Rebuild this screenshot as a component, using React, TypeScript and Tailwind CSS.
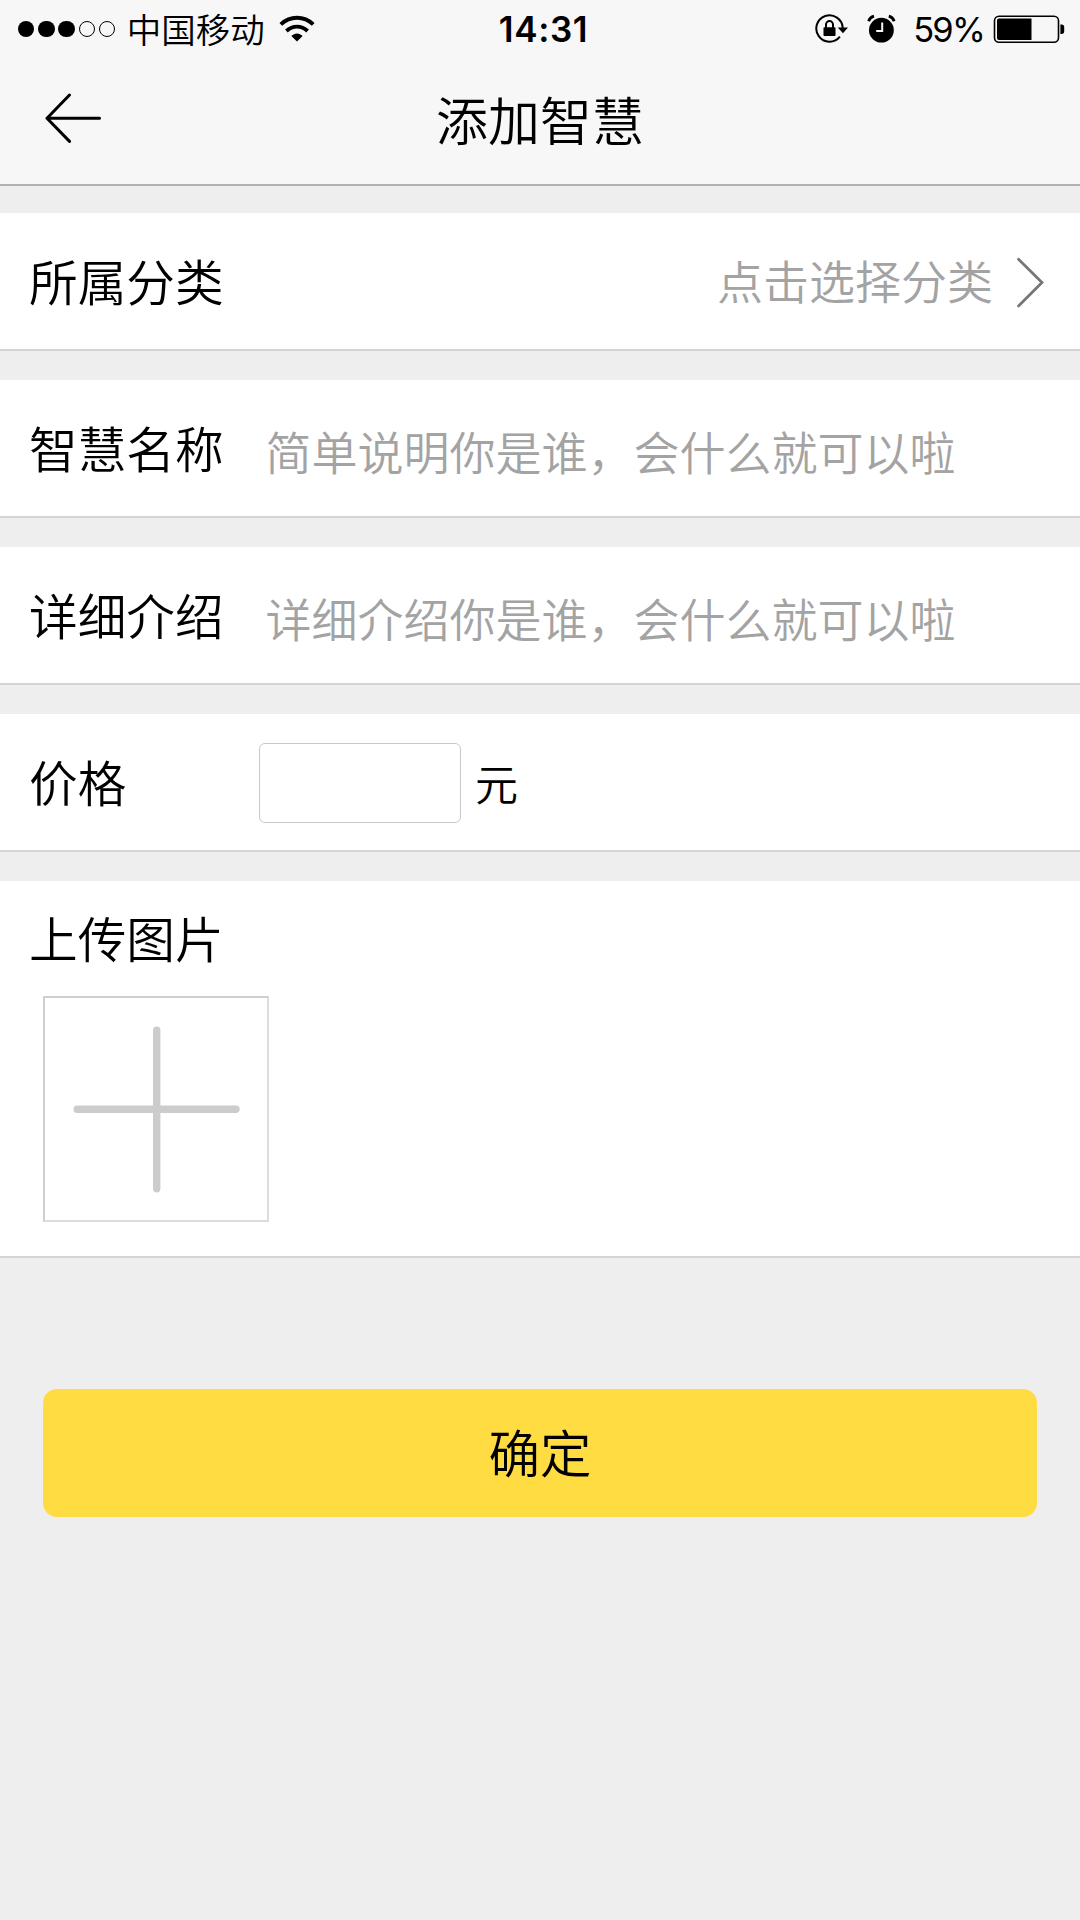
import React from "react";

function WifiIcon() {
  return (
    <svg className="block h-[28px] w-[36px]" viewBox="0 0 36 28" fill="none" stroke="#000">
      <path d="M1.8 9.4C11 0.6 25 0.6 34.2 9.4" strokeWidth="3.9" />
      <path d="M7.4 16C13.6 10.2 22.4 10.2 28.6 16" strokeWidth="3.8" />
      <path d="M12.4 21C15.6 17.6 20.4 17.6 23.6 21L18 26.6Z" fill="#000" stroke="none" />
    </svg>
  );
}

function RotationLockIcon() {
  return (
    <svg className="block h-[30px] w-[34px]" viewBox="0 0 34 30" fill="none" stroke="#000">
      <path d="M25.9 22.6A13.2 13.2 0 1 1 28.7 13.9" strokeWidth="2" />
      <path d="M23.7 13.6H34L29 19.2Z" fill="#000" stroke="none" />
      <rect x="9.5" y="13.2" width="12" height="8.8" rx="0.8" fill="#000" stroke="none" />
      <path d="M12 13.9V10.6a3.5 3.5 0 0 1 7 0V13.9" strokeWidth="2" />
    </svg>
  );
}

function AlarmIcon() {
  return (
    <svg className="block h-[30px] w-[30px]" viewBox="0 0 30 30" fill="none">
      <circle cx="15.4" cy="16.2" r="12.4" fill="#000" />
      <path d="M2.6 7.2A8 8 0 0 1 8 2.2M28.2 7.2A8 8 0 0 0 22.8 2.2" stroke="#000" strokeWidth="2.8" />
      <path d="M16.2 8.6V17H10.2" stroke="#f7f7f7" strokeWidth="2" />
    </svg>
  );
}

function BatteryIcon() {
  return (
    <svg className="block h-[28px] w-[72px]" viewBox="0 0 72 28" fill="none">
      <rect x="1.5" y="1.2" width="64" height="26" rx="4.5" stroke="#000" strokeWidth="1.6" />
      <path d="M6 3.6H38.5V25H6A2 2 0 0 1 4 23V5.6A2 2 0 0 1 6 3.6Z" fill="#000" />
      <path d="M67.4 9.5h1.2a2.6 2.6 0 0 1 2.6 2.6v4.2a2.6 2.6 0 0 1-2.6 2.6H67.4Z" fill="#000" />
    </svg>
  );
}

function StatusBar() {
  return (
    <div className="grid h-[58px] grid-cols-[1fr_auto_1fr] items-center pl-[18px] pr-[15px]">
      <div className="flex items-center">
        <div className="flex gap-[3.8px]">
          {[true, true, true, false, false].map((on, i) => (
            <span
              key={i}
              className={
                on
                  ? "size-[16.4px] rounded-full bg-black"
                  : "size-[16.4px] rounded-full border-[1.5px] border-black"
              }
            />
          ))}
        </div>
        <span className="ml-[11.5px] pb-[2px] text-[34.5px] leading-[56px]">中国移动</span>
        <span className="ml-[14.5px] pb-[1px]">
          <WifiIcon />
        </span>
      </div>
      <span className="pl-[4px] pt-[1px] font-[Inter] text-[35px] font-semibold leading-[57px] tracking-[0.6px]">14:31</span>
      <div className="flex items-center justify-end">
        <RotationLockIcon />
        <span className="ml-[18px]">
          <AlarmIcon />
        </span>
        <span className="ml-[17px] pt-[1px] font-[Inter] text-[34.5px] font-normal leading-[57px] tracking-[-1.8px]">59%</span>
        <span className="ml-[9px]">
          <BatteryIcon />
        </span>
      </div>
    </div>
  );
}

function Header() {
  return (
    <header className="h-[186px] border-b-2 border-[#b2b2b2] bg-[#f7f7f7]">
      <StatusBar />
      <div className="grid h-[121px] grid-cols-[1fr_auto_1fr] items-center px-[43px]">
        <svg className="block h-[52px] w-[60px]" viewBox="0 0 60 52" fill="none" stroke="#000" strokeWidth="3">
          <path d="M26.5 2L4 25.3L26.5 48.4M4 25.3H56.5" strokeLinecap="round" strokeLinejoin="round" />
        </svg>
        <h1 className="text-[52px] leading-[60px]">添加智慧</h1>
      </div>
    </header>
  );
}

function Row({ label, children }: { label: string; children: React.ReactNode }) {
  return (
    <section className="flex h-[138px] items-center border-b-2 border-[#d4d4d4] bg-white pl-[29px] pr-[36px]">
      <span className="w-[230px] shrink-0 pb-[2px] text-[48.7px] leading-[60px]">{label}</span>
      {children}
    </section>
  );
}

function Hint({ text }: { text: string }) {
  return <span className="ml-[6.5px] pt-[4px] text-[46px] leading-[60px] text-[#a3a3a3]">{text}</span>;
}

export default function App() {
  return (
    <div className="flex min-h-[1920px] w-[1080px] flex-col bg-[#eee] font-['Noto_Sans_CJK_SC',sans-serif] font-[350] text-black">
      <Header />
      <main className="flex flex-col gap-[29px] pt-[27px]">
        <Row label="所属分类">
          <span className="ml-auto pb-[4px] text-[46px] leading-[60px] text-[#a3a3a3]">点击选择分类</span>
          <svg className="ml-[23px] mt-[4px] block h-[52px] w-[28px]" viewBox="0 0 28 52" fill="none">
            <path d="M2.5 2.2L26 25.5L2.5 49" stroke="#777" strokeWidth="2.8" strokeLinecap="round" />
          </svg>
        </Row>
        <Row label="智慧名称">
          <Hint text="简单说明你是谁，会什么就可以啦" />
        </Row>
        <Row label="详细介绍">
          <Hint text="详细介绍你是谁，会什么就可以啦" />
        </Row>
        <Row label="价格">
          <input className="mt-[2px] h-[80px] w-[202px] rounded-[6px] border-[1.5px] border-[#c8c8c8] bg-white px-3 text-[43px] outline-none" />
          <span className="ml-[14px] text-[43px] leading-[60px]">元</span>
        </Row>
        <section className="h-[377px] border-b-2 border-[#d4d4d4] bg-white px-[29px] pt-[26px]">
          <h2 className="text-[48.7px] leading-[60px]">上传图片</h2>
          <button className="ml-[14px] mt-[29px] flex size-[226px] items-center justify-center border-2 border-b-[#dcdcdc] border-l-[#cfcfcf] border-r-[#dcdcdc] border-t-[#cfcfcf]">
            <svg className="block size-[168px]" viewBox="0 0 168 168">
              <path d="M84.7 5.2V163.8M5.2 84.3H164" stroke="#ccc" strokeWidth="7.4" strokeLinecap="round" />
            </svg>
          </button>
        </section>
      </main>
      <button className="mx-[43px] mt-[131px] h-[128px] rounded-[14px] bg-[#ffdc42] pb-[4px] text-[51.5px] leading-[60px]">
        确定
      </button>
    </div>
  );
}
